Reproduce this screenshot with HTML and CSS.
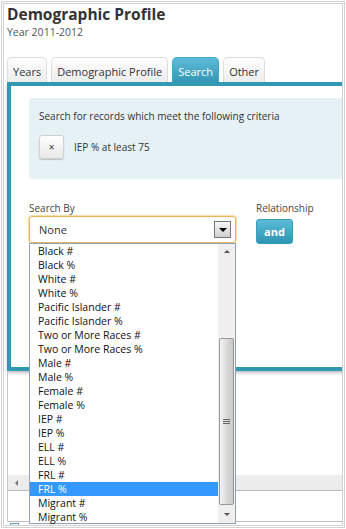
FILE: index.html
```html
<!DOCTYPE html>
<html lang="en">
<head>
    <meta charset="UTF-8">
    <title>Demographic Profile</title>
    <link rel="stylesheet" href="styles.css">
</head>
<body>
<div class="window">

	<h1>Demographic Profile</h1>
	<div class="year">Year 2011-2012</div>

	<nav class="tabs">
		<a class="tab">Years</a>
		<a class="tab">Demographic Profile</a>
		<a class="tab active">Search</a>
		<a class="tab">Other</a>
	</nav>

	<div class="panel">
		<div class="criteria">
			<p>Search for records which meet the following criteria</p>
			<div class="rule">
				<button class="remove">&times;</button>
				<span>IEP % at least 75</span>
			</div>
		</div>

		<div class="form-row">
			<div class="field">
				<label>Search By</label>
				<div class="select">
					<span>None</span>
					<span class="arrow"></span>
				</div>

				<!-- open dropdown of the select -->
				<div class="dropdown">
					<ul class="options">
						<li>Black #</li>
						<li>Black %</li>
						<li>White #</li>
						<li>White %</li>
						<li>Pacific Islander #</li>
						<li>Pacific Islander %</li>
						<li>Two or More Races #</li>
						<li>Two or More Races %</li>
						<li>Male #</li>
						<li>Male %</li>
						<li>Female #</li>
						<li>Female %</li>
						<li>IEP #</li>
						<li>IEP %</li>
						<li>ELL #</li>
						<li>ELL %</li>
						<li>FRL #</li>
						<li class="selected">FRL %</li>
						<li>Migrant #</li>
						<li>Migrant %</li>
					</ul>
					<div class="vscroll">
						<div class="up"></div>
						<div class="track">
							<div class="thumb"><span class="grip"></span></div>
						</div>
						<div class="down"></div>
					</div>
				</div>
			</div>

			<div class="field">
				<label>Relationship</label>
				<button class="and">and</button>
			</div>
		</div>
	</div>

	<div class="lower">
		<div class="grid-body"></div>
		<div class="hscroll"><span class="left"></span></div>
		<div class="grid-foot"></div>
	</div>

	<div class="status">
		<svg width="9" height="9" viewBox="0 0 9 9">
			<rect x="0.5" y="0.5" width="8" height="8" fill="#eef3fa" stroke="#7a9cc8"/>
			<path d="M2 4.5h5M4.5 2v5" stroke="#4a6fa5"/>
		</svg>
	</div>

</div>
</body>
</html>
```

FILE: styles.css
```css
body {
	margin: 0;
	font-family: "Open Sans", sans-serif;
	color: #333;
	background-color: #fff;
}

.window {
	margin: 1px;
	height: 527px;
	box-sizing: border-box;
	border: 3px double #d2d2d2;
	padding-left: 3px;
	overflow: hidden;
	position: relative;
}

h1 {
	margin: 0;
	font-size: 15.5px;
	line-height: 21px;
	font-weight: 700;
	color: #333;
}

.year {
	font-size: 10.5px;
	line-height: 14px;
	color: #555;
}

.tabs {
	display: flex;
	gap: 4px;
	margin-top: 18px;
}

.tab {
	height: 25px;
	box-sizing: border-box;
	padding: 3px 5px 0;
	font-size: 11px;
	line-height: 21px;
	color: #333;
	border: 1px solid #ddd;
	border-bottom: none;
	border-radius: 5px 5px 0 0;
	background: linear-gradient(#ffffff, #ececec);
}

.tab.active {
	color: #fff;
	border-color: #45a7c4;
	background: linear-gradient(#5ebbd8, #3398b6);
}

.panel {
	height: 289px;
	box-sizing: border-box;
	margin-right: -40px;
	border: 4px solid #3398b2;
	padding: 12px 0 0 18px;
	box-shadow: 0 2px 3px rgba(0, 0, 0, 0.25);
}

.criteria {
	background-color: #e6f1f6;
	border-radius: 4px;
	padding: 11px 10px 20px;
	font-size: 10px;
	line-height: 14px;
}

.criteria p {
	margin: 0;
}

.rule {
	display: flex;
	align-items: center;
	gap: 10px;
	margin-top: 12px;
}

.remove {
	width: 25px;
	height: 24px;
	padding: 0;
	font-family: inherit;
	font-size: 10px;
	color: #333;
	border: 1px solid #d0d0d0;
	border-radius: 3px;
	background: linear-gradient(#ffffff, #e8e8e8);
	box-shadow: 0 1px 1px rgba(0, 0, 0, 0.2);
}

.form-row {
	display: flex;
	gap: 20px;
	margin-top: 22px;
}

.field {
	position: relative;
	display: flex;
	flex-direction: column;
	align-items: flex-start;
}

.field label {
	font-size: 10px;
	line-height: 14px;
	margin-bottom: 1px;
	color: #444;
}

.select {
	width: 207px;
	height: 27px;
	box-sizing: border-box;
	display: flex;
	align-items: center;
	justify-content: space-between;
	padding: 0 4px 0 9px;
	font-size: 11px;
	border: 1px solid #e8b55a;
	border-radius: 3px;
	box-shadow: 0 0 1px 1px #f6dca4;
}

.arrow {
	width: 17px;
	height: 17px;
	box-sizing: border-box;
	border: 1px solid #777;
	background: linear-gradient(#f6f6f6, #cfcfcf);
	display: flex;
	align-items: center;
	justify-content: center;
}

.arrow::after {
	content: "";
	border-left: 4px solid transparent;
	border-right: 4px solid transparent;
	border-top: 4px solid #000;
}

.and {
	margin-top: 3px;
	width: 37px;
	height: 25px;
	padding: 0;
	font-family: inherit;
	font-size: 11px;
	font-weight: 700;
	color: #fff;
	border: 1px solid #3a9fbd;
	border-radius: 3px;
	background: linear-gradient(#5cbcd9, #2f94b2);
}

/* open select list */
.dropdown {
	position: absolute;
	top: 42px;
	left: 0;
	width: 207px;
	height: 281px;
	box-sizing: border-box;
	border: 1px solid #8ea2b8;
	background-color: #fff;
	display: flex;
	z-index: 10;
}

.options {
	flex: 1;
	margin: 0;
	padding: 0;
	list-style: none;
}

.options li {
	height: 14px;
	line-height: 14px;
	padding-left: 8px;
	font-size: 10.5px;
	color: #111;
}

.options li.selected {
	background-color: #3399ff;
	color: #fff;
}

.vscroll {
	width: 17px;
	display: flex;
	flex-direction: column;
	background-color: #efefef;
}

.up, .down {
	height: 15px;
	display: flex;
	align-items: center;
	justify-content: center;
}

.up::after {
	content: "";
	border-left: 3px solid transparent;
	border-right: 3px solid transparent;
	border-bottom: 3px solid #555;
}

.down {
	height: 17px;
}

.down::after {
	content: "";
	border-left: 3px solid transparent;
	border-right: 3px solid transparent;
	border-top: 3px solid #555;
}

.track {
	flex: 1;
	padding-top: 79px;
	padding-left: 1px;
}

.thumb {
	width: 15px;
	height: 167px;
	box-sizing: border-box;
	border: 1px solid #999;
	border-radius: 2px;
	background: linear-gradient(to right, #f4f4f4, #d6d6d6 60%, #c8c8c8);
	display: flex;
	align-items: center;
	justify-content: center;
}

.grip {
	width: 7px;
	height: 5px;
	border-top: 1px solid #666;
	border-bottom: 1px solid #666;
	box-sizing: border-box;
	position: relative;
}

.grip::after {
	content: "";
	position: absolute;
	left: 0;
	right: 0;
	top: 1px;
	border-top: 1px solid #666;
}

.lower {
	height: 150px;
	display: flex;
	flex-direction: column;
	border-left: 1px solid #c8c8c8;
	border-bottom: 1px solid #c0c0c0;
}

.grid-body {
	flex: 1;
}

.hscroll {
	height: 16px;
	box-sizing: border-box;
	background-color: #ececec;
	border-bottom: 1px solid #b8b8b8;
	display: flex;
	align-items: center;
	padding-left: 7px;
}

.hscroll .left {
	border-top: 3px solid transparent;
	border-bottom: 3px solid transparent;
	border-right: 3px solid #777;
}

.grid-foot {
	height: 30px;
}

.status {
	padding: 1px 0 0 3px;
	line-height: 0;
}
```
